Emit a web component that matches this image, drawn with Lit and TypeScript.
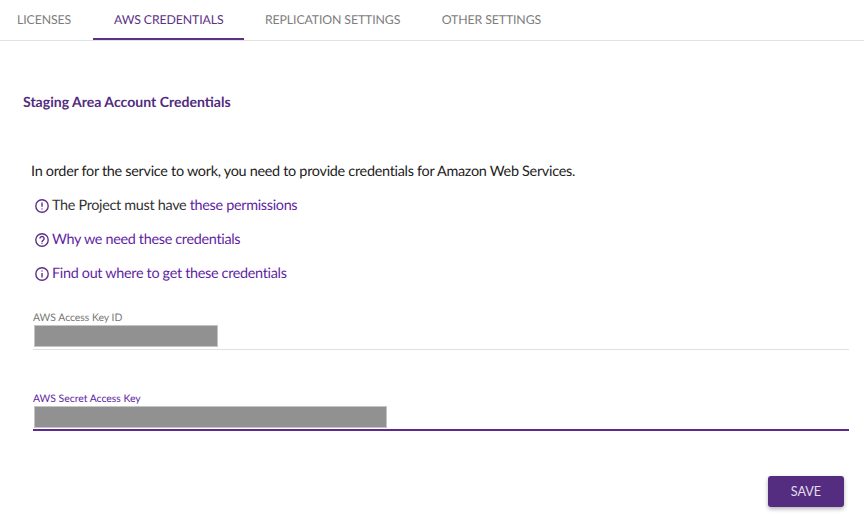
import { LitElement, html, css, svg } from "lit";
import { customElement } from "lit/decorators.js";

const bang = svg`<circle cx="7" cy="7" r="6.2"/><path d="M7 3.6v4.2"/><path d="M7 9.4v1"/>`;
const info = svg`<circle cx="7" cy="7" r="6.2"/><path d="M7 3.5v1"/><path d="M7 6.1v4.3"/>`;
const help = svg`<circle cx="7" cy="7" r="6.2"/><path d="M4.9 5.6a2.1 2.1 0 1 1 3.4 1.6C7.4 7.8 7 8 7 8.9"/><path d="M7 9.8v1"/>`;

@customElement("app-root")
export class AppRoot extends LitElement {
  static styles = css`
    :host { display: block; width: 864px; height: 530px; background: #fff; font-family: Lato, sans-serif; overflow: hidden; text-rendering: geometricPrecision; }
    .tabs { display: flex; height: 40px; border-bottom: 1px solid #e2e2e2; box-sizing: content-box; }
    .tab { padding: 0 20.75px; font-size: 12.3px; letter-spacing: -0.11px; line-height: 39px; color: #7d7d7d; height: 38px; border-bottom: 2px solid transparent; white-space: nowrap; }
    .tab.first { padding: 0 22.2px 0 17px; }
    .tab.active { color: #5c3186; border-bottom-color: #5c3186; }
    .title { margin: 51px 0 0 23px; font-size: 14.05px; line-height: 20px; font-weight: 700; color: #522b7f; }
    .intro { margin: 50px 0 0 31px; font-size: 14.4px; letter-spacing: -0.28px; line-height: 20px; color: #222; }
    .rows { margin: 14px 0 0 35px; display: flex; flex-direction: column; gap: 14px; }
    .row { display: flex; align-items: center; gap: 3px; font-size: 14.4px; letter-spacing: -0.31px; line-height: 20px; color: #333; }
    .row svg { width: 14px; height: 14px; fill: none; stroke: #5c3186; stroke-width: 1.4; flex: none; }
    .link { color: #5f1fa3; }
    .field { margin: 0 15px 0 33px; }
    .field.one { margin-top: 27px; }
    .field.two { margin-top: 42px; }
    .label { font-size: 10.4px; line-height: 14px; color: #777; height: 14px; }
    .mask { height: 22px; margin: 0 0 0 1px; background: #919191; border: 1px solid #c4c4c4; box-sizing: border-box; }
    .line { margin-top: 2px; height: 1px; background: #e0e0e0; }
    .two .label { color: #5f1fa3; }
    .two .line { margin-top: 1px; height: 2px; background: #5c2a90; }
    .actions { display: flex; justify-content: flex-end; margin: 45px 20px 0 0; }
    .save { width: 76px; height: 31px; background: #542c80; color: #e4dcee; border: 0; border-radius: 3px; font: 12.6px Lato, sans-serif; box-shadow: 0 2px 4px rgba(0,0,0,.3); padding: 0 0 1px; }
  `;

  render() {
    return html`
      <div class="tabs">
        <div class="tab first">LICENSES</div>
        <div class="tab active">AWS CREDENTIALS</div>
        <div class="tab">REPLICATION SETTINGS</div>
        <div class="tab">OTHER SETTINGS</div>
      </div>
      <div class="title">Staging Area Account Credentials</div>
      <div class="intro">In order for the service to work, you need to provide credentials for Amazon Web Services.</div>
      <div class="rows">
        <div class="row"><svg viewBox="0 0 14 14">${bang}</svg><span>The Project must have <span class="link">these permissions</span></span></div>
        <div class="row"><svg viewBox="0 0 14 14">${help}</svg><span class="link">Why we need these credentials</span></div>
        <div class="row"><svg viewBox="0 0 14 14">${info}</svg><span class="link">Find out where to get these credentials</span></div>
      </div>
      <div class="field one">
        <div class="label">AWS Access Key ID</div>
        <div class="mask" style="width:184px"></div>
        <div class="line"></div>
      </div>
      <div class="field two">
        <div class="label">AWS Secret Access Key</div>
        <div class="mask" style="width:353px"></div>
        <div class="line"></div>
      </div>
      <div class="actions"><button class="save">SAVE</button></div>
    `;
  }
}
